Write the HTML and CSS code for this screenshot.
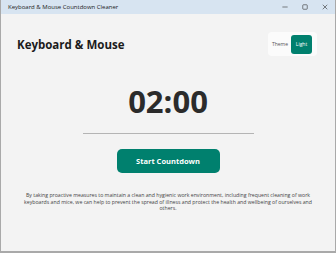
FILE: index.html
```html
<!DOCTYPE html>
<html lang="en">

<head>
    <meta charset="UTF-8">
    <meta name="viewport" content="width=device-width, initial-scale=1.0">
    <title>Keyboard &amp; Mouse Countdown Cleaner</title>
    <link rel="stylesheet" href="styles.css">
</head>

<body>
    <div class="window">
        <div class="titlebar">
            <span class="title">Keyboard &amp; Mouse Countdown Cleaner</span>
            <div class="controls">
                <span class="ctl">
                    <svg width="8" height="8" viewBox="0 0 8 8"><path d="M0.5 4h7" stroke="#333" stroke-width="0.8"/></svg>
                </span>
                <span class="ctl">
                    <svg width="8" height="8" viewBox="0 0 8 8"><rect x="1" y="1" width="6" height="6" rx="1" fill="none" stroke="#333" stroke-width="0.8"/></svg>
                </span>
                <span class="ctl">
                    <svg width="8" height="8" viewBox="0 0 8 8"><path d="M1 1l6 6M7 1l-6 6" stroke="#333" stroke-width="0.8"/></svg>
                </span>
            </div>
        </div>

        <div class="content">
            <div class="header">
                <h1>Keyboard &amp; Mouse</h1>
                <div class="theme-card">
                    <span class="theme-label">Theme</span>
                    <button class="theme-btn">Light</button>
                </div>
            </div>

            <div class="timer">02:00</div>
            <hr class="divider">

            <button class="start">Start Countdown</button>

            <p class="note">By taking proactive measures to maintain a clean and hygienic work environment, including frequent cleaning of work keyboards and mice, we can help to prevent the spread of illness and protect the health and wellbeing of ourselves and others.</p>
        </div>
    </div>
</body>

</html>
```

FILE: styles.css
```css
* {
    box-sizing: border-box;
}

body {
    margin: 0;
    font-family: "Open Sans", "Noto Sans", sans-serif;
    background: #f3f3f3;
}

.window {
    width: 336px;
    height: 253px;
    display: flex;
    flex-direction: column;
    border-left: 1px solid #a9a9a9;
    border-right: 1px solid #a9a9a9;
    border-bottom: 2px solid #a9a9a9;
    background: #f3f3f3;
}

.titlebar {
    height: 14px;
    background: #d7e4f1;
    display: flex;
    align-items: center;
    justify-content: space-between;
    padding-left: 7px;
}

.title {
    font-size: 6px;
    color: #222;
}

.controls {
    display: flex;
    height: 100%;
}

.ctl {
    width: 20px;
    display: flex;
    align-items: center;
    justify-content: center;
}

.ctl svg {
    width: 6px;
    height: 6px;
}

.content {
    flex: 1;
    display: flex;
    flex-direction: column;
    align-items: center;
}

.header {
    width: 100%;
    display: flex;
    justify-content: space-between;
    align-items: center;
    padding: 18px 18px 0 16px;
}

h1 {
    margin: 0;
    font-size: 11.5px;
    font-weight: 700;
    color: #1b1b1b;
}

.theme-card {
    background: #fbfbfb;
    border-radius: 4px;
    display: flex;
    align-items: center;
    gap: 3px;
    padding: 2px 5px 2px 4px;
    height: 24px;
}

.theme-label {
    font-size: 5px;
    color: #555;
}

.theme-btn {
    background: #00806e;
    color: #fff;
    border: none;
    border-radius: 3px;
    font-family: inherit;
    font-size: 5px;
    width: 21px;
    height: 19px;
    padding: 0;
}

.timer {
    margin-top: 27px;
    font-size: 31px;
    font-weight: 700;
    color: #2b2b2b;
    line-height: 36px;
}

.divider {
    width: 171px;
    border: none;
    border-top: 1px solid #b4b4b4;
    margin: 14px 0 0 0;
}

.start {
    margin-top: 15px;
    width: 103px;
    height: 24px;
    background: #00806e;
    color: #fff;
    border: none;
    border-radius: 5px;
    font-family: inherit;
    font-size: 7.5px;
    font-weight: 700;
}

.note {
    margin: 19px 19px 0 19px;
    text-align: center;
    font-size: 5.2px;
    line-height: 6.5px;
    color: #444;
}
```
